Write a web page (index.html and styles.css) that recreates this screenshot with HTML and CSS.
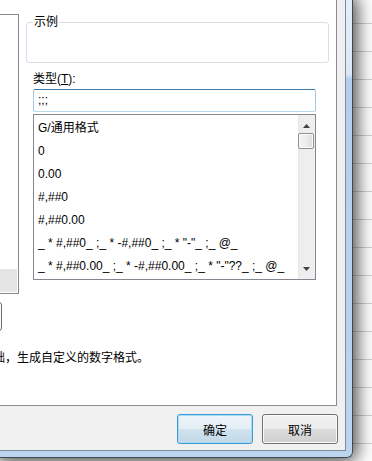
FILE: index.html
```html
<!DOCTYPE html>
<html lang="zh-CN">
<head>
<meta charset="utf-8">
<title>设置单元格格式</title>
<link rel="stylesheet" href="styles.css">
</head>
<body>
<div class="desktop">
  <div class="window">
    <div class="client">
      <div class="tabpage">
        <div class="top-row">
          <div class="left-col">
            <div class="cat-list"><div class="cat-item selected"></div></div>
            <div class="btn btn-delete">删除</div>
          </div>
          <div class="right-col">
            <fieldset class="sample">
              <legend>示例</legend>
              <div class="sample-body"></div>
            </fieldset>
            <div class="type-label">类型(<u>T</u>):</div>
            <div class="type-input">;;;</div>
            <div class="fmt-list">
              <div class="fmt-items">
                <div class="fmt-item">G/通用格式</div>
                <div class="fmt-item">0</div>
                <div class="fmt-item">0.00</div>
                <div class="fmt-item">#,##0</div>
                <div class="fmt-item">#,##0.00</div>
                <div class="fmt-item">_ * #,##0_ ;_ * -#,##0_ ;_ * "-"_ ;_ @_</div>
                <div class="fmt-item">_ * #,##0.00_ ;_ * -#,##0.00_ ;_ * "-"??_ ;_ @_</div>
              </div>
              <div class="scrollbar">
                <div class="sb-btn sb-up"><svg width="7" height="4" viewBox="0 0 7 4"><polygon points="3.5,0 7,4 0,4" fill="#404040"/></svg></div>
                <div class="sb-thumb"></div>
                <div class="sb-track"></div>
                <div class="sb-btn sb-down"><svg width="7" height="4" viewBox="0 0 7 4"><polygon points="0,0 7,0 3.5,4" fill="#404040"/></svg></div>
              </div>
            </div>
          </div>
        </div>
        <p class="hint">以现有格式为基础，生成自定义的数字格式。</p>
      </div>
      <div class="buttons">
        <div class="btn btn-default">确定</div>
        <div class="btn">取消</div>
      </div>
    </div>
  </div>
</div>
</body>
</html>
```
FILE: styles.css
```css
* { box-sizing: border-box; }
html, body { margin: 0; padding: 0; }
body {
  width: 372px;
  height: 461px;
  overflow: hidden;
  font-family: "Liberation Sans", "Noto Sans CJK SC", sans-serif;
  font-size: 12px;
  color: #000;
  background-color: #fff;
  background-image: repeating-linear-gradient(to bottom, transparent 0 23px, #d2d2d2 23px 24px, transparent 24px 28px);
}
.desktop { display: flex; }
.window {
  flex: none;
  width: 353px;
  height: 458px;
  border-right: 1px solid #3f4954;
  border-bottom: 1px solid #3f4954;
  border-bottom-right-radius: 6px;
  padding: 0 6px 6px 0;
  background: linear-gradient(to bottom, #e2eef9 0, #dbe9f7 74px, #b4cfee 79px, #bcd5ef 100%);
  box-shadow: 0 0 18px 4px rgba(0, 0, 0, 0.72);
}
.client {
  height: 100%;
  background: #f0f0f0;
  border-right: 1px solid #7f8c99;
  border-bottom: 1px solid #7f8c99;
  display: flex;
  flex-direction: column;
}
.tabpage {
  width: 337px;
  height: 406px;
  flex: none;
  background: #fff;
  border-right: 1px solid #898c95;
  border-bottom: 1px solid #898c95;
  display: flex;
  flex-direction: column;
}
.top-row { display: flex; }
.left-col {
  width: 26px;
  flex: none;
  display: flex;
  flex-direction: column;
}
.cat-list {
  width: 19px;
  height: 280px;
  margin-top: 14px;
  border: 1px solid #828790;
  border-left: none;
  padding: 0 1px 1px 0;
  display: flex;
  flex-direction: column;
  justify-content: flex-end;
}
.cat-item { height: 23px; }
.cat-item.selected { background: #e4e4e4; }
.right-col {
  width: 303px;
  flex: none;
  display: flex;
  flex-direction: column;
}
.sample {
  margin: 14px 0 0 0;
  padding: 0;
  min-width: 0;
  border: 1px solid #d5dfe5;
  border-radius: 3px;
}
.sample legend {
  margin-left: 6px;
  padding: 0 1px;
  line-height: 16px;
  font-size: 12px;
}
.sample-body { height: 32px; }
.type-label {
  margin: 8px 0 0 7px;
  line-height: 16px;
}
.type-input {
  margin: 2px 0 0 7px;
  width: 283px;
  height: 23px;
  border: 1px solid;
  border-color: #3d7bad #a4c9e3 #b7d9ed #a4c9e3;
  border-radius: 2px;
  padding-left: 4px;
  line-height: 21px;
}
.fmt-list {
  margin: 2px 0 0 7px;
  width: 283px;
  height: 166px;
  border: 1px solid #828790;
  display: flex;
}
.fmt-items {
  flex: 1;
  min-width: 0;
  padding: 2px 0 0 4px;
  overflow: hidden;
}
.fmt-item {
  height: 23px;
  line-height: 23px;
  white-space: nowrap;
}
.scrollbar {
  width: 17px;
  flex: none;
  display: flex;
  flex-direction: column;
  background: linear-gradient(to right, #e6e6e6 0, #eeeeee 2px, #efefef 100%);
}
.sb-btn {
  height: 17px;
  flex: none;
  display: flex;
  justify-content: center;
  align-items: flex-start;
}
.sb-btn svg { display: block; }
.sb-up { padding-top: 9px; }
.sb-down { padding-top: 5px; }
.sb-thumb {
  height: 16px;
  flex: none;
  margin: 1px 1px 0 0;
  border: 1px solid #8e8f8f;
  border-radius: 2px;
  background: linear-gradient(to right, #f4f4f4 0, #ececec 50%, #dcdcdc 100%);
  box-shadow: inset 0 0 0 1px #fbfbfb;
}
.sb-track { flex: 1; }
.hint {
  margin: 18px 0 0 -91px;
  line-height: 16px;
  white-space: nowrap;
  font-family: "Noto Sans CJK SC", sans-serif;
}
.buttons {
  display: flex;
  justify-content: flex-end;
  gap: 9px;
  margin-top: 8px;
  padding-right: 7px;
}
.btn {
  width: 76px;
  height: 30px;
  flex: none;
  display: flex;
  align-items: center;
  justify-content: center;
  font-family: "Noto Sans CJK SC", sans-serif;
  font-size: 12px;
  border: 1px solid #707070;
  border-radius: 3px;
  background: linear-gradient(to bottom, #f2f2f2 0, #ebebeb 50%, #dddddd 50%, #cfcfcf 100%);
  box-shadow: inset 0 0 0 1px #fbfbfb;
}
.btn-default {
  border-color: #3c9bd6;
  background: linear-gradient(to bottom, #eef5fa 0, #e3eef5 50%, #d0e2ee 50%, #c3d9e7 100%);
  box-shadow: inset 0 0 0 1px #a9dcf4;
}
.btn-delete {
  height: 29px;
  margin: 8px 0 0 -74px;
}
```
